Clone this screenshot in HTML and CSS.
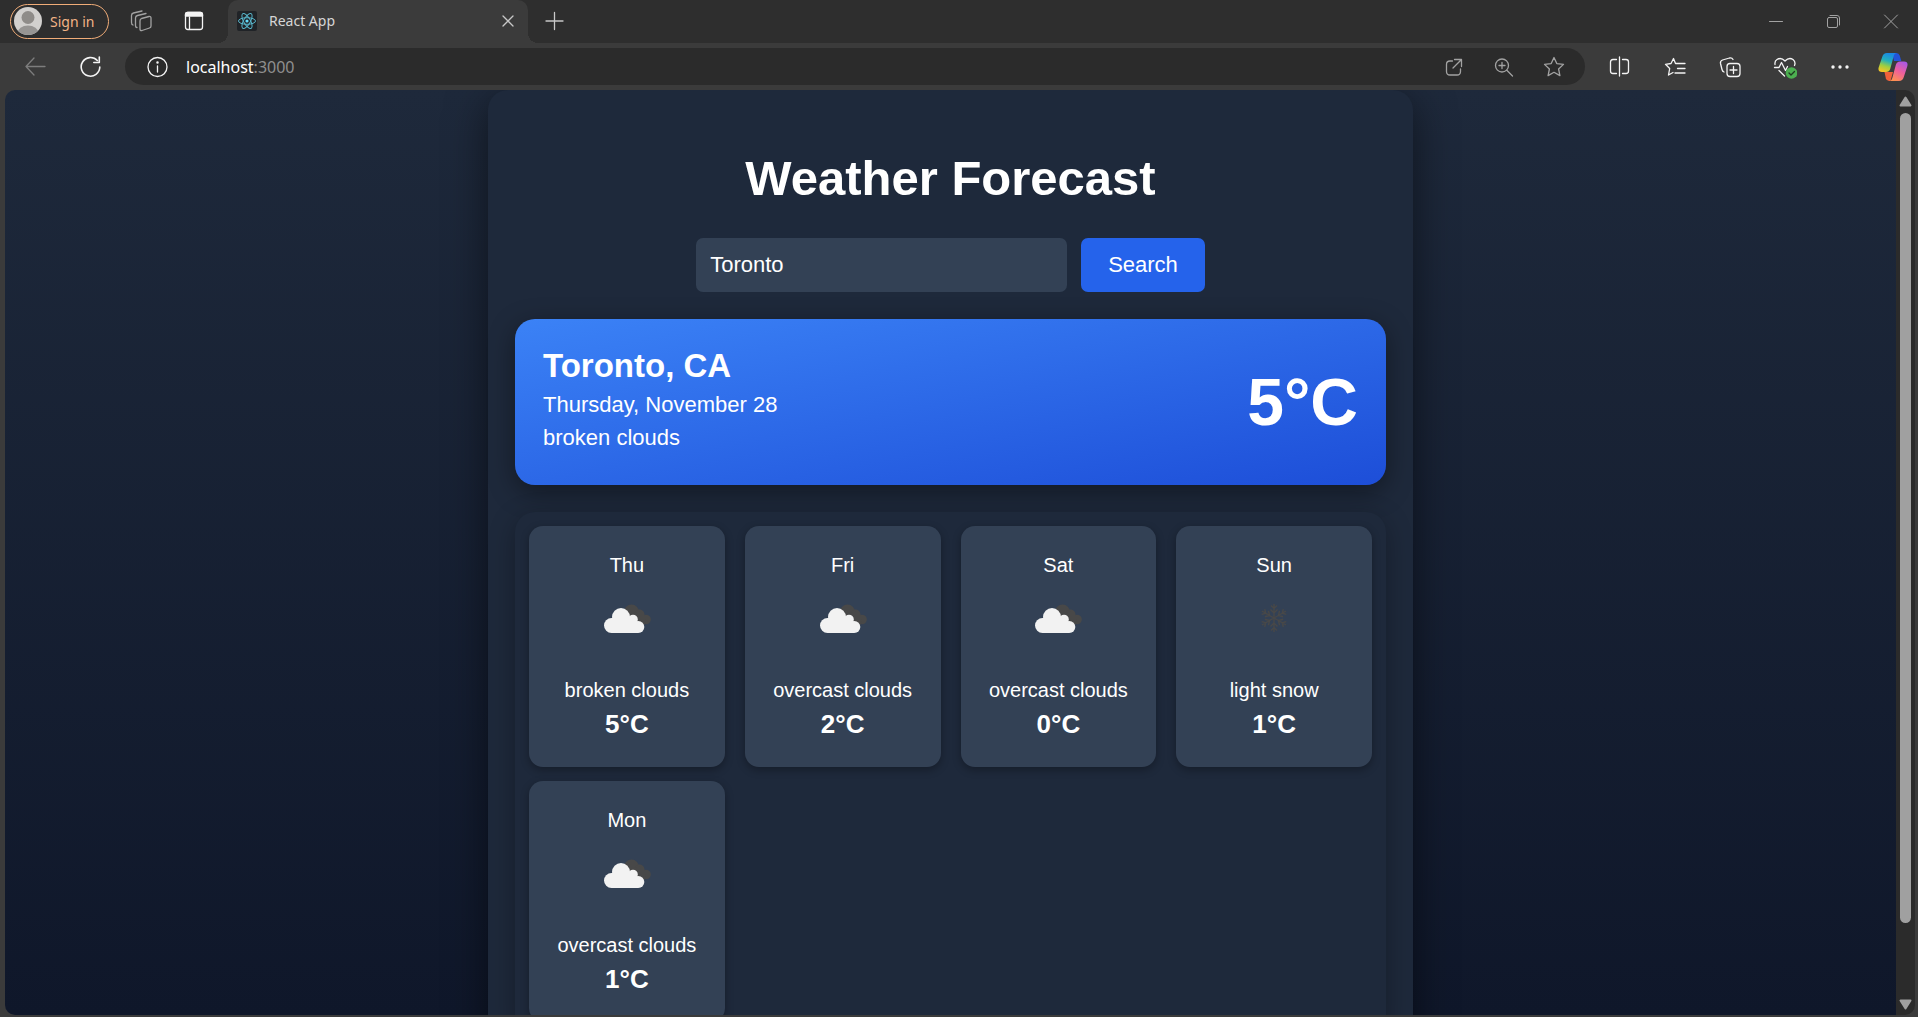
FILE: index.html
```html
<!DOCTYPE html>
<html lang="en">
<head>
<meta charset="utf-8">
<title>React App</title>
<link rel="stylesheet" href="styles.css">
</head>
<body>
<svg class="defs" aria-hidden="true">
  <symbol id="clouds" viewBox="0 0 68 68">
    <g fill="#484848"><circle cx="38.500" cy="28" r="7.500"/><circle cx="46.500" cy="30.500" r="5"/><circle cx="53" cy="35.500" r="4.800"/><path d="M40 30l9-3 4 8-1 5.500h-6z"/></g>
    <g fill="#f2f2f2"><circle cx="18.500" cy="41.500" r="7.500"/><circle cx="28" cy="33" r="9"/><circle cx="40" cy="35.500" r="4.800"/><circle cx="45.300" cy="43" r="6"/><path d="M18.500 34H42l3 4v11H18.500z"/></g>
  </symbol>
  <symbol id="snow" viewBox="0 0 68 68">
    <g fill="none" stroke="#484848" stroke-width="1.400">
      <path id="arm" d="M34 34V20M31 21.500L34 24.500L37 21.500M30.500 25.500L34 29L37.500 25.500"/>
      <use href="#arm" transform="rotate(60 34 34)"/><use href="#arm" transform="rotate(120 34 34)"/><use href="#arm" transform="rotate(180 34 34)"/><use href="#arm" transform="rotate(240 34 34)"/><use href="#arm" transform="rotate(300 34 34)"/>
    </g>
  </symbol>
</svg>

<header class="browser">
  <div class="tabstrip">
    <button class="profile" type="button">
      <svg width="28" height="28" viewBox="0 0 28 28"><clipPath id="face"><circle cx="14" cy="14" r="14"/></clipPath><g clip-path="url(#face)"><path fill="#d2d0ce" d="M0 0h28v28H0z"/><circle cx="14" cy="10.500" r="6.500" fill="#8f8c89"/><ellipse cx="14" cy="26" rx="10.500" ry="7.500" fill="#979593"/></g></svg>
      <span>Sign in</span>
    </button>
    <button class="strip-btn" type="button" aria-label="Workspaces">
      <svg class="icon dim" viewBox="0 0 24 24"><path d="M12.500 9.500l7.500-2q2-.4 2 1.500v8q0 1.500-1.500 2l-7.500 2.500q-2 .5-2-1.500v-8q0-2 1.500-2.500zM8 18.500q-1.500 0-1.500-2V9q0-2 2-2.500L17 4.500M4 16q-1.500-.5-1.500-2.500v-7q0-2 2-2.500L13 2"/></svg>
    </button>
    <button class="strip-btn" type="button" aria-label="Tab actions">
      <svg class="icon" viewBox="0 0 24 24"><rect x="3.500" y="3.500" width="17" height="17" rx="2.500"/><path d="M3.500 7V5.500q0-2 2-2h13q2 0 2 2V7z" fill="currentColor"/><path d="M7.500 8v12"/></svg>
    </button>
    <div class="tab">
      <svg width="20" height="20" viewBox="0 0 20 20"><rect width="20" height="20" rx="2" fill="#202327"/><g fill="none" stroke="#58b5ca" stroke-width="1"><ellipse cx="10" cy="10" rx="8.500" ry="3.300"/><ellipse cx="10" cy="10" rx="8.500" ry="3.300" transform="rotate(60 10 10)"/><ellipse cx="10" cy="10" rx="8.500" ry="3.300" transform="rotate(120 10 10)"/></g><circle cx="10" cy="10" r="1.600" fill="#61dafb"/></svg>
      <span class="tab-title">React App</span>
      <button class="tab-close" type="button" aria-label="Close tab"><svg class="icon soft" viewBox="0 0 24 24"><path d="M7 7l10 10M17 7L7 17"/></svg></button>
    </div>
    <button class="strip-btn" type="button" aria-label="New tab"><svg class="icon soft" viewBox="0 0 24 24"><path d="M11.500 3.500v17M3 12h17"/></svg></button>
    <div class="window-controls">
      <button type="button" aria-label="Minimize"><svg class="icon dim thin" viewBox="0 0 24 24"><path d="M5.500 12.500h13"/></svg></button>
      <button type="button" aria-label="Restore"><svg class="icon dim thin" viewBox="0 0 24 24"><rect x="6.500" y="8.500" width="10" height="10" rx="1.500"/><path d="M9 6.500h7q2.500 0 2.500 2.500v7"/></svg></button>
      <button type="button" aria-label="Close"><svg class="icon dim thin" viewBox="0 0 24 24"><path d="M6.500 6l13 13M19.500 6l-13 13"/></svg></button>
    </div>
  </div>
  <div class="toolbar">
    <button class="tool" type="button" aria-label="Back"><svg class="icon faint" viewBox="0 0 24 24"><path d="M21 11.500H2M10 3L2 11.500 10 20"/></svg></button>
    <button class="tool" type="button" aria-label="Refresh"><svg class="icon strong" viewBox="0 0 24 24"><path d="M20.800 12A9.300 9.300 0 1 1 18.300 5.500M20.300 2v5.500h-5.500"/></svg></button>
    <div class="address">
      <svg class="icon" viewBox="0 0 24 24"><circle cx="11.500" cy="12" r="9.500"/><path d="M11.500 11v6"/><circle cx="11.500" cy="7.500" r=".6" fill="currentColor"/></svg>
      <span class="url">localhost<span class="port">:3000</span></span>
      <button type="button" aria-label="Open in app"><svg class="icon dim" viewBox="0 0 24 24"><path d="M10.500 6H8Q4.500 6 4.500 9.500v7Q4.500 20 8 20h7q3.500 0 3.500-3.500V14M12.500 4.500h7v7M19.500 4.500L11 13"/></svg></button>
      <button type="button" aria-label="Zoom"><svg class="icon dim" viewBox="0 0 24 24"><circle cx="10" cy="10.500" r="6.500"/><path d="M14.800 15.300L20.500 21M10 7.500v6M7 10.500h6"/></svg></button>
      <button type="button" aria-label="Favorite"><svg class="icon dim" viewBox="0 0 24 24"><path d="M12 2.500l2.800 6.100 6.700.8-4.900 4.600 1.300 6.600-5.900-3.300-5.900 3.300 1.300-6.600-4.900-4.600 6.700-.8z"/></svg></button>
    </div>
    <button class="tool" type="button" aria-label="Split screen"><svg class="icon" viewBox="0 0 24 24"><path d="M11.500 2v19M8.500 4.500H5Q2.500 4.500 2.500 7v9q0 2.500 2.500 2.500h3.500M14.500 4.500H18q2.500 0 2.500 2.500v9q0 2.500-2.500 2.500h-3.500"/></svg></button>
    <button class="tool" type="button" aria-label="Favorites"><svg class="icon" viewBox="0 0 24 24"><path d="M15 8.500h-2.500L10.500 3.500 8 8.500l-5.500.8 4.200 4.200-1.200 6.500 4.500-2.500M15 8.500h7M14.500 13.500H22M12 18h10"/></svg></button>
    <button class="tool" type="button" aria-label="Collections"><svg class="icon" viewBox="0 0 24 24"><rect x="9" y="8.500" width="13" height="13" rx="3"/><path d="M15.500 11.500v7M12 15h7M6 17q-1.500-.5-2-2.500L2.500 8.500Q2 6 4.500 5l7-2q2.500-.5 3.500 1.500"/></svg></button>
    <button class="tool" type="button" aria-label="Browser essentials"><svg class="icon" viewBox="0 0 24 24"><path d="M2 9.500Q1.500 6 4 4.500q4-2.500 8 1.500 4-4 8-1.500 3 2.500 1.500 6M1.500 12.500H6l2.500-5 4 8 2-4M6 15.500l5.500 5.500"/><circle cx="18.500" cy="18" r="5.800" fill="#4caf50" stroke="none"/><path d="M16 18l2 2 3.500-3.500" stroke="#1e3a20"/></svg></button>
    <button class="tool" type="button" aria-label="Settings and more"><svg class="icon" viewBox="0 0 24 24"><g fill="currentColor" stroke="none"><circle cx="5" cy="12" r="1.700"/><circle cx="12" cy="12" r="1.700"/><circle cx="19" cy="12" r="1.700"/></g></svg></button>
    <button class="tool copilot" type="button" aria-label="Copilot">
      <svg width="30" height="28" viewBox="0 0 30 28">
        <defs><linearGradient id="cl" x1=".6" y1="0" x2=".3" y2="1"><stop offset="0" stop-color="#1a86e6"/><stop offset=".4" stop-color="#22b0bd"/><stop offset=".7" stop-color="#9fce40"/><stop offset="1" stop-color="#f7c426"/></linearGradient>
        <linearGradient id="cr" x1=".8" y1="0" x2=".3" y2="1"><stop offset="0" stop-color="#a758e6"/><stop offset=".5" stop-color="#ee5f9c"/><stop offset="1" stop-color="#ff9150"/></linearGradient></defs>
        <path fill="#2353d9" d="M14 0h4.500q2.500 0 3.300 2.800L23.300 8H16z"/>
        <path fill="#f0603a" d="M6.500 19H15l-2.500 9H11q-2.500 0-3.200-2.800z"/>
        <path fill="url(#cl)" d="M9 0h10q-2.500 0-3.300 3l-3.500 13q-.9 3-4.200 3H4q-4.500 0-3.300-4.800L4.200 4Q5.300 0 9 0z"/>
        <path fill="url(#cr)" d="M21 28H11q2.500 0 3.300-3l3.500-13q.9-3.500 4.200-3.500h4q4.500 0 3.300 4.800L25.800 24q-1.100 4-4.800 4z"/>
      </svg>
    </button>
  </div>
</header>

<div class="viewport">
  <div class="page">
    <main class="app">
      <h1>Weather Forecast</h1>
      <form class="search">
        <input type="text" value="Toronto" aria-label="City">
        <button type="button">Search</button>
      </form>
      <section class="current">
        <div>
          <h2>Toronto, CA</h2>
          <p>Thursday, November 28</p>
          <p>broken clouds</p>
        </div>
        <p class="current-temp">5°C</p>
      </section>
      <section class="forecast">
        <article class="day"><p>Thu</p><svg class="weather"><use href="#clouds"/></svg><p>broken clouds</p><p class="temp">5°C</p></article>
        <article class="day"><p>Fri</p><svg class="weather"><use href="#clouds"/></svg><p>overcast clouds</p><p class="temp">2°C</p></article>
        <article class="day"><p>Sat</p><svg class="weather"><use href="#clouds"/></svg><p>overcast clouds</p><p class="temp">0°C</p></article>
        <article class="day"><p>Sun</p><svg class="weather"><use href="#snow"/></svg><p>light snow</p><p class="temp">1°C</p></article>
        <article class="day"><p>Mon</p><svg class="weather"><use href="#clouds"/></svg><p>overcast clouds</p><p class="temp">1°C</p></article>
      </section>
    </main>
  </div>
  <div class="scrollbar" aria-hidden="true">
    <svg width="13" height="11" viewBox="0 0 13 11"><path d="M6.500 1.500L11.500 9.500h-10z" fill="#a0a0a0" stroke="#a0a0a0" stroke-width="2" stroke-linejoin="round"/></svg>
    <div class="track"><div class="thumb"></div></div>
    <svg width="13" height="11" viewBox="0 0 13 11"><path d="M6.500 9.500L1.500 1.500h10z" fill="#a0a0a0" stroke="#a0a0a0" stroke-width="2" stroke-linejoin="round"/></svg>
  </div>
</div>
</body>
</html>
```
FILE: styles.css
```css
* { box-sizing: border-box; }

body {
  margin: 0;
  height: 100vh;
  display: flex;
  flex-direction: column;
  overflow: hidden;
  background: #3b3b3b;
  color: #fff;
  font-family: "Liberation Sans", Arial, sans-serif;
}

h1, h2, p { margin: 0; }

button {
  border: 0;
  padding: 0;
  background: none;
  color: inherit;
  font: inherit;
}

svg { display: block; flex: none; }
.defs { position: absolute; width: 0; height: 0; }

/* Browser chrome */
.browser { font-family: "Noto Sans", "Open Sans", sans-serif; }

.browser button {
  display: flex;
  align-items: center;
  justify-content: center;
}

.icon {
  width: 24px;
  height: 24px;
  fill: none;
  stroke: currentColor;
  stroke-width: 1.3;
  stroke-linecap: round;
  stroke-linejoin: round;
  color: #f4f4f4;
}
.dim { color: #a2a2a2; }
.soft { color: #c8c8c8; }
.faint { color: #7d7d7d; }
.strong { stroke-width: 1.6; }
.thin { stroke-width: 1; }

.tabstrip {
  display: flex;
  align-items: center;
  height: 43px;
  padding: 0 0 1px 10px;
  background: #2e2e2e;
}

.browser .profile {
  justify-content: flex-start;
  gap: 8px;
  width: 99px;
  height: 35px;
  margin-right: 5px;
  padding-left: 3px;
  border: 1px solid #f0ac78;
  border-radius: 18px;
  color: #f3b486;
  font-size: 14px;
}

.strip-btn { width: 53px; height: 40px; }

.tab {
  position: relative;
  align-self: flex-start;
  display: flex;
  align-items: center;
  width: 300px;
  height: 43px;
  margin-left: 8px;
  padding: 0 8px 2px 9px;
  gap: 12px;
  border-radius: 10px 10px 0 0;
  background: #3b3b3b;
  color: #d6d6d6;
  font-size: 14px;
}
.tab::before, .tab::after {
  content: "";
  position: absolute;
  bottom: 0;
  width: 10px;
  height: 10px;
}
.tab::before { right: 100%; background: radial-gradient(circle at 0 0, #2e2e2e 10px, #3b3b3b 10px); }
.tab::after { left: 100%; background: radial-gradient(circle at 100% 0, #2e2e2e 10px, #3b3b3b 10px); }
.tab-title { flex: 1; }

.window-controls { display: flex; margin-left: auto; }
.window-controls button { width: 57px; height: 42px; }

.toolbar {
  display: flex;
  align-items: center;
  height: 47px;
  padding-left: 8px;
}
.tool { width: 55px; height: 40px; }
.copilot { width: 51px; }

.address {
  flex: 1;
  display: flex;
  align-items: center;
  height: 37px;
  margin: 0 7px;
  padding: 0 6px 0 21px;
  border-radius: 19px;
  background: #2b2b2b;
}
.address button { width: 50px; height: 37px; }
.url { flex: 1; margin-left: 16px; font-size: 16px; }
.port { color: #8f8f8f; }

/* Page area */
.viewport {
  flex: 1;
  min-height: 0;
  display: flex;
  margin: 0 3px 2px 5px;
  border-radius: 10px;
  overflow: hidden;
}

.page {
  flex: 1;
  min-width: 0;
  overflow: hidden;
  background: linear-gradient(180deg, #1e293b, #0f172a);
}

.app {
  max-width: 925px;
  margin: 0 auto;
  padding: 27px;
  border-radius: 20px;
  background: #1e293b;
  box-shadow: 0 10px 40px rgba(0, 0, 0, 0.5);
}

h1 {
  margin: 33px 0 32px;
  font-size: 49px;
  line-height: 56px;
  text-align: center;
}

.search {
  display: flex;
  justify-content: center;
  gap: 14px;
  margin-bottom: 27px;
}
.search input {
  width: 371px;
  height: 54px;
  padding: 0 14px;
  border: 0;
  border-radius: 7px;
  background: #334155;
  color: #fff;
  font-family: inherit;
  font-size: 22px;
}
.search button {
  padding: 0 27px;
  border-radius: 7px;
  background: #2563eb;
  font-size: 22px;
}

.current {
  display: flex;
  justify-content: space-between;
  align-items: center;
  margin-bottom: 27px;
  padding: 28px;
  border-radius: 20px;
  background: linear-gradient(to bottom right, #3b82f6, #1d4ed8);
  box-shadow: 0 7px 27px rgba(0, 0, 0, 0.4);
  font-size: 22px;
  line-height: 33px;
}
.current h2 {
  margin-bottom: 3px;
  font-size: 33px;
  line-height: 38px;
}
.current > div { padding-bottom: 3px; }
.current-temp {
  font-size: 66px;
  font-weight: bold;
}

.forecast {
  display: grid;
  grid-template-columns: repeat(4, 1fr);
  gap: 14px 20px;
  padding: 14px;
  border-radius: 20px;
  background: #1e293b;
  box-shadow: 0 7px 27px rgba(0, 0, 0, 0.3);
}

.day {
  padding: 24px 8px;
  border-radius: 14px;
  background: #334155;
  box-shadow: 0 3px 8px rgba(0, 0, 0, 0.3);
  font-size: 20px;
  line-height: 30px;
  text-align: center;
}
.weather {
  width: 68px;
  height: 68px;
  margin: 4px auto 23px;
}
.temp {
  font-size: 26px;
  font-weight: bold;
  line-height: 38px;
}

.scrollbar {
  display: flex;
  flex-direction: column;
  align-items: center;
  gap: 6px;
  width: 19px;
  padding: 6px 0 5px;
  background: #2b2b2b;
}
.track { flex: 1; width: 11px; }
.thumb {
  height: 92%;
  border-radius: 6px;
  background: #a0a0a0;
}
```
